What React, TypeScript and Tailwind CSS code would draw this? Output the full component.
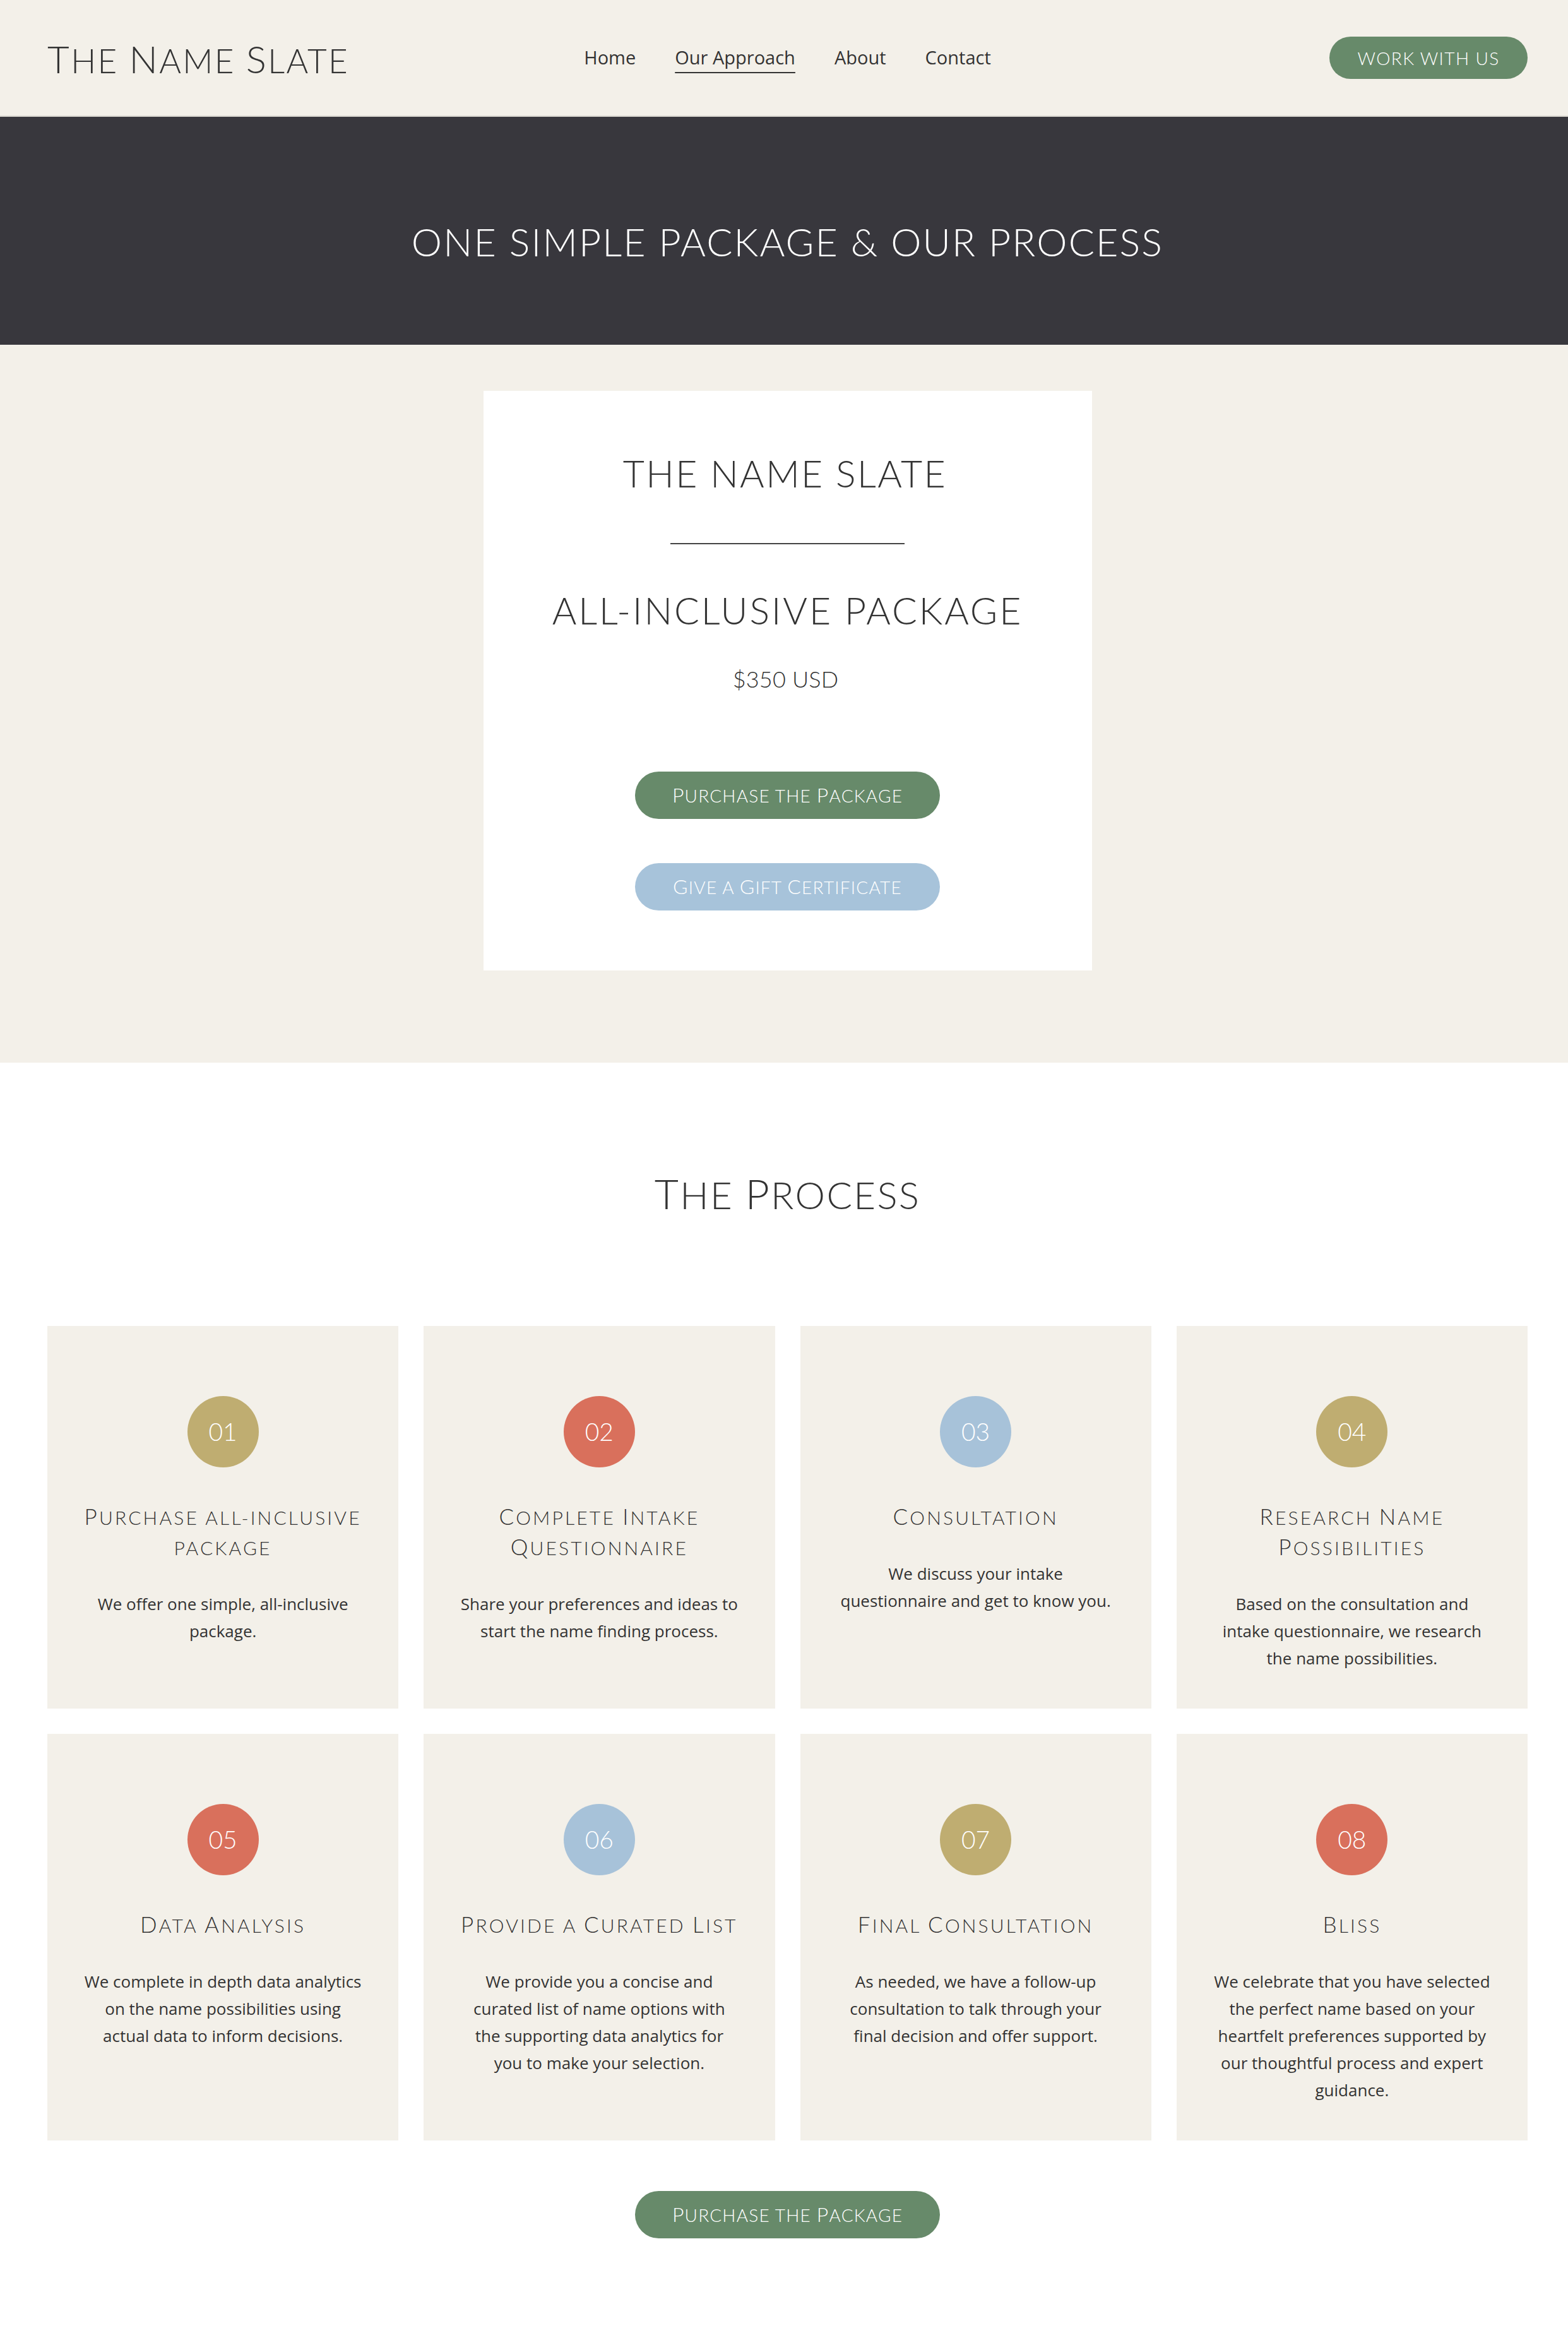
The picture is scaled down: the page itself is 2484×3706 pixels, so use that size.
import React from "react";

function SC({ text, big, small }: { text: string; big: string; small: string }) {
  const runs = text.match(/([A-Z]+|[^A-Z]+)/g) || [];
  return (
    <>
      {runs.map((r, i) =>
        /^[A-Z]+$/.test(r) ? (
          <span key={i} className={big}>
            {r}
          </span>
        ) : (
          <span key={i} className={small + " uppercase"}>
            {r}
          </span>
        )
      )}
    </>
  );
}

function PillButton({ label, color }: { label: string; color: string }) {
  return (
    <div
      className={
        "w-[483px] h-[75px] rounded-full flex items-center justify-center text-white font-light leading-none tracking-[0.075em] [font-family:Lato,sans-serif] " +
        color
      }
    >
      <span className="pb-[2px] text-[32px] leading-none">
        <SC text={label} big="text-[32px]" small="text-[28px] leading-none" />
      </span>
    </div>
  );
}

type Step = {
  n: string;
  color: string;
  title: string[];
  desc: string[];
};

const steps: Step[] = [
  {
    n: "01",
    color: "bg-[#bfad71]",
    title: ["Purchase all-inclusive", "package"],
    desc: ["We offer one simple, all-inclusive", "package."],
  },
  {
    n: "02",
    color: "bg-[#d9705c]",
    title: ["Complete Intake", "Questionnaire"],
    desc: ["Share your preferences and ideas to", "start the name finding process."],
  },
  {
    n: "03",
    color: "bg-[#a7c2d9]",
    title: ["Consultation"],
    desc: ["We discuss your intake", "questionnaire and get to know you."],
  },
  {
    n: "04",
    color: "bg-[#bfad71]",
    title: ["Research Name", "Possibilities"],
    desc: ["Based on the consultation and", "intake questionnaire, we research", "the name possibilities."],
  },
  {
    n: "05",
    color: "bg-[#d9705c]",
    title: ["Data Analysis"],
    desc: ["We complete in depth data analytics", "on the name possibilities using", "actual data to inform decisions."],
  },
  {
    n: "06",
    color: "bg-[#a7c2d9]",
    title: ["Provide a Curated List"],
    desc: [
      "We provide you a concise and",
      "curated list of name options with",
      "the supporting data analytics for",
      "you to make your selection.",
    ],
  },
  {
    n: "07",
    color: "bg-[#bfad71]",
    title: ["Final Consultation"],
    desc: ["As needed, we have a follow-up", "consultation to talk through your", "final decision and offer support."],
  },
  {
    n: "08",
    color: "bg-[#d9705c]",
    title: ["Bliss"],
    desc: [
      "We celebrate that you have selected",
      "the perfect name based on your",
      "heartfelt preferences supported by",
      "our thoughtful process and expert",
      "guidance.",
    ],
  },
];

function StepCard({ s }: { s: Step }) {
  return (
    <div className="bg-[#f3f0e9] flex flex-col items-center pt-[111px] pb-[58px] text-center">
      <div
        className={
          "w-[113px] h-[113px] rounded-full flex items-center justify-center text-white text-[39px] font-light leading-none [font-family:Lato,sans-serif] " +
          s.color
        }
      >
        {s.n}
      </div>
      <div className="mt-[53px] text-[#333] text-[35px] font-light leading-[48px] tracking-[0.09em] [font-family:Lato,sans-serif]">
        {s.title.map((t, i) => (
          <div key={i} className="whitespace-nowrap h-[48px]">
            <SC text={t} big="text-[35px]" small="text-[30px] leading-none" />
          </div>
        ))}
      </div>
      <div className="mt-[46px] text-[26px] leading-[43px] text-[#333] [font-family:'Open_Sans',sans-serif]">
        {s.desc.map((d, i) => (
          <div key={i} className="whitespace-nowrap">
            {d}
          </div>
        ))}
      </div>
    </div>
  );
}

export default function App() {
  return (
    <div className="w-[2484px] bg-white">
      {/* Header */}
      <header className="h-[185px] bg-[#f3f0e9] border-b-2 border-[#d9d7d0] pl-[75px] pr-[64px] flex items-center">
        <div className="flex-1 flex items-center">
          <div className="text-[#333] text-[60px] font-light leading-none tracking-[0.04em] [font-family:Lato,sans-serif] whitespace-nowrap pt-[2px]">
            <SC text="The Name Slate" big="text-[60px]" small="text-[53px] leading-none" />
          </div>
        </div>
        <nav className="flex items-center gap-[62px] text-[29px] text-[#333] [font-family:'Open_Sans',sans-serif] pb-[2px]">
          <span>Home</span>
          <span className="underline decoration-2 underline-offset-[12px]">Our Approach</span>
          <span>About</span>
          <span>Contact</span>
        </nav>
        <div className="flex-1 flex justify-end">
          <div className="w-[314px] h-[67px] rounded-full bg-[#678a6a] flex items-center justify-center text-white text-[28px] font-light tracking-[0.05em] leading-none [font-family:Lato,sans-serif]">
            WORK WITH US
          </div>
        </div>
      </header>

      {/* Banner */}
      <section className="h-[361px] bg-[#38373d] pt-[167px] pl-[75px] pr-[64px] text-center">
        <h1 className="text-white text-[61px] font-light leading-none tracking-[0.035em] [font-family:Lato,sans-serif] whitespace-nowrap">
          ONE SIMPLE PACKAGE &amp; OUR PROCESS
        </h1>
      </section>

      {/* Package */}
      <section className="bg-[#f3f0e9] pt-[73px] pb-[146px] pl-[75px] pr-[64px]">
        <div className="mx-auto w-[964px] bg-white pt-[101px] pb-[95px] flex flex-col items-center text-[#333] [font-family:Lato,sans-serif]">
          <div className="text-[59px] font-light leading-none tracking-[0.04em] whitespace-nowrap pr-[8px]">THE NAME SLATE</div>
          <div className="mt-[81px] w-[371px] h-[2px] bg-[#444]" />
          <div className="mt-[75px] text-[59px] font-light leading-none tracking-[0.05em] whitespace-nowrap">
            ALL-INCLUSIVE PACKAGE
          </div>
          <div className="mt-[61px] text-[36px] font-light leading-none tracking-[0.005em] whitespace-nowrap pr-[6px]">$350 USD</div>
          <div className="mt-[129px]">
            <PillButton label="Purchase the Package" color="bg-[#678a6a]" />
          </div>
          <div className="mt-[70px]">
            <PillButton label="Give a Gift Certificate" color="bg-[#a7c3da]" />
          </div>
        </div>
      </section>

      {/* Process */}
      <section className="bg-white pt-[174px] pb-[163px] pl-[75px] pr-[64px]">
        <h2 className="text-center text-[#333] text-[66px] font-light leading-none tracking-[0.035em] [font-family:Lato,sans-serif]">
          <SC text="The Process" big="text-[66px]" small="text-[60px] leading-none" />
        </h2>
        <div className="mt-[177px] grid grid-cols-4 gap-[40px]">
          {steps.map((s) => (
            <StepCard key={s.n} s={s} />
          ))}
        </div>
        <div className="mt-[80px] flex justify-center">
          <PillButton label="Purchase the Package" color="bg-[#678a6a]" />
        </div>
      </section>
    </div>
  );
}
